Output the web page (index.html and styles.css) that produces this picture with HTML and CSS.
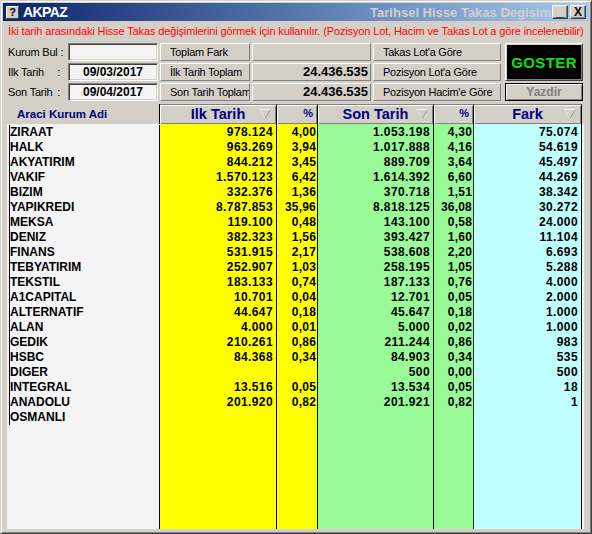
FILE: index.html
```html
<!DOCTYPE html>
<html lang="tr">
<head>
<meta charset="utf-8">
<title>AKPAZ</title>
<link rel="stylesheet" href="styles.css">
</head>
<body>
<div class="window">
  <div class="titlebar">
    <span class="help-icon">?</span>
    <span class="app-title">AKPAZ</span>
    <span class="sub-title">Tarihsel Hisse Takas Degisim</span>
    <span class="tb-btn">_</span>
    <span class="tb-btn close">X</span>
  </div>
  <div class="note">İki tarih arasındaki Hisse Takas değişimlerini görmek için kullanılır. (Pozisyon Lot, Hacim ve Takas Lot a göre incelenebilir)</div>
  <div class="controls">
    <div class="lbl">Kurum Bul :</div>
    <div class="field"></div>
    <div class="btn">Toplam Fark</div>
    <div class="panel"></div>
    <div class="btn">Takas Lot'a Göre</div>
    <div class="goster">GOSTER</div>

    <div class="lbl">Ilk Tarih<span class="colon">:</span></div>
    <div class="field">09/03/2017</div>
    <div class="btn">İlk Tarih Toplam</div>
    <div class="panel value">24.436.535</div>
    <div class="btn">Pozisyon Lot'a Göre</div>

    <div class="lbl">Son Tarih<span class="colon">:</span></div>
    <div class="field">09/04/2017</div>
    <div class="btn">Son Tarih Toplam</div>
    <div class="panel value">24.436.535</div>
    <div class="btn">Pozisyon Hacim'e Göre</div>
    <div class="yazdir">Yazdir</div>
  </div>

  <div class="grid">
    <div class="row head">
      <div class="hname">Araci Kurum Adi</div>
      <div class="hcol">Ilk Tarih<svg class="sort" viewBox="0 0 12 10" width="12" height="10"><polygon points="0.5,0.5 11.5,0.5 6,9.5" fill="none" stroke="#9a9a9a"/><polyline points="0.5,0.5 11.5,0.5" stroke="#fff" fill="none"/><polyline points="0.5,0.5 6,9.5" stroke="#f4f4f4" fill="none"/></svg></div>
      <div class="hpct">%</div>
      <div class="hcol">Son Tarih<svg class="sort" viewBox="0 0 12 10" width="12" height="10"><polygon points="0.5,0.5 11.5,0.5 6,9.5" fill="none" stroke="#9a9a9a"/><polyline points="0.5,0.5 11.5,0.5" stroke="#fff" fill="none"/><polyline points="0.5,0.5 6,9.5" stroke="#f4f4f4" fill="none"/></svg></div>
      <div class="hpct">%</div>
      <div class="hcol">Fark<svg class="sort" viewBox="0 0 12 10" width="12" height="10"><polygon points="0.5,0.5 11.5,0.5 6,9.5" fill="none" stroke="#9a9a9a"/><polyline points="0.5,0.5 11.5,0.5" stroke="#fff" fill="none"/><polyline points="0.5,0.5 6,9.5" stroke="#f4f4f4" fill="none"/></svg></div>
    </div>
    <div class="body">
      <div class="row"><div class="name">ZIRAAT</div><div class="c1">978.124</div><div class="c2">4,00</div><div class="c3">1.053.198</div><div class="c4">4,30</div><div class="c5">75.074</div></div>
      <div class="row"><div class="name">HALK</div><div class="c1">963.269</div><div class="c2">3,94</div><div class="c3">1.017.888</div><div class="c4">4,16</div><div class="c5">54.619</div></div>
      <div class="row"><div class="name">AKYATIRIM</div><div class="c1">844.212</div><div class="c2">3,45</div><div class="c3">889.709</div><div class="c4">3,64</div><div class="c5">45.497</div></div>
      <div class="row"><div class="name">VAKIF</div><div class="c1">1.570.123</div><div class="c2">6,42</div><div class="c3">1.614.392</div><div class="c4">6,60</div><div class="c5">44.269</div></div>
      <div class="row"><div class="name">BIZIM</div><div class="c1">332.376</div><div class="c2">1,36</div><div class="c3">370.718</div><div class="c4">1,51</div><div class="c5">38.342</div></div>
      <div class="row"><div class="name">YAPIKREDI</div><div class="c1">8.787.853</div><div class="c2">35,96</div><div class="c3">8.818.125</div><div class="c4">36,08</div><div class="c5">30.272</div></div>
      <div class="row"><div class="name">MEKSA</div><div class="c1">119.100</div><div class="c2">0,48</div><div class="c3">143.100</div><div class="c4">0,58</div><div class="c5">24.000</div></div>
      <div class="row"><div class="name">DENIZ</div><div class="c1">382.323</div><div class="c2">1,56</div><div class="c3">393.427</div><div class="c4">1,60</div><div class="c5">11.104</div></div>
      <div class="row"><div class="name">FINANS</div><div class="c1">531.915</div><div class="c2">2,17</div><div class="c3">538.608</div><div class="c4">2,20</div><div class="c5">6.693</div></div>
      <div class="row"><div class="name">TEBYATIRIM</div><div class="c1">252.907</div><div class="c2">1,03</div><div class="c3">258.195</div><div class="c4">1,05</div><div class="c5">5.288</div></div>
      <div class="row"><div class="name">TEKSTIL</div><div class="c1">183.133</div><div class="c2">0,74</div><div class="c3">187.133</div><div class="c4">0,76</div><div class="c5">4.000</div></div>
      <div class="row"><div class="name">A1CAPITAL</div><div class="c1">10.701</div><div class="c2">0,04</div><div class="c3">12.701</div><div class="c4">0,05</div><div class="c5">2.000</div></div>
      <div class="row"><div class="name">ALTERNATIF</div><div class="c1">44.647</div><div class="c2">0,18</div><div class="c3">45.647</div><div class="c4">0,18</div><div class="c5">1.000</div></div>
      <div class="row"><div class="name">ALAN</div><div class="c1">4.000</div><div class="c2">0,01</div><div class="c3">5.000</div><div class="c4">0,02</div><div class="c5">1.000</div></div>
      <div class="row"><div class="name">GEDIK</div><div class="c1">210.261</div><div class="c2">0,86</div><div class="c3">211.244</div><div class="c4">0,86</div><div class="c5">983</div></div>
      <div class="row"><div class="name">HSBC</div><div class="c1">84.368</div><div class="c2">0,34</div><div class="c3">84.903</div><div class="c4">0,34</div><div class="c5">535</div></div>
      <div class="row"><div class="name">DIGER</div><div class="c1"></div><div class="c2"></div><div class="c3">500</div><div class="c4">0,00</div><div class="c5">500</div></div>
      <div class="row"><div class="name">INTEGRAL</div><div class="c1">13.516</div><div class="c2">0,05</div><div class="c3">13.534</div><div class="c4">0,05</div><div class="c5">18</div></div>
      <div class="row"><div class="name">ANADOLU</div><div class="c1">201.920</div><div class="c2">0,82</div><div class="c3">201.921</div><div class="c4">0,82</div><div class="c5">1</div></div>
      <div class="row"><div class="name">OSMANLI</div><div class="c1"></div><div class="c2"></div><div class="c3"></div><div class="c4"></div><div class="c5"></div></div>
      <div class="row filler"><div class="name"></div><div class="c1"></div><div class="c2"></div><div class="c3"></div><div class="c4"></div><div class="c5"></div></div>
    </div>
  </div>
</div>
</body>
</html>
```

FILE: styles.css
```css
* { box-sizing: border-box; }

html, body {
  margin: 0;
  padding: 0;
  background: #d4d0c8;
}

body {
  width: 592px;
  height: 534px;
  overflow: hidden;
  font-family: "Liberation Sans", Arial, sans-serif;
}

.window {
  width: 592px;
  height: 534px;
  background: #d4d0c8;
  border-top: 1px solid #d4d0c8;
  border-left: 1px solid #d4d0c8;
  border-right: 1px solid #404040;
  border-bottom: 1px solid #404040;
  box-shadow: inset 1px 1px 0 #fff, inset -1px -1px 0 #808080;
  padding: 2px;
  display: flex;
  flex-direction: column;
}

/* title bar */
.titlebar {
  height: 18px;
  flex: none;
  display: flex;
  align-items: center;
  padding: 0 3px 0 3px;
  background: linear-gradient(to right, #0a246a, #a6caf0);
}

.help-icon {
  width: 13px;
  height: 13px;
  background: #d4d0c8;
  border: 1px solid #fff;
  border-right-color: #404040;
  border-bottom-color: #404040;
  font-size: 11px;
  font-weight: bold;
  line-height: 11px;
  text-align: center;
  color: #000;
}

.app-title {
  margin-left: 4px;
  color: #fff;
  font-weight: bold;
  font-size: 14px;
  letter-spacing: -0.6px;
}

.sub-title {
  margin-left: auto;
  margin-right: 1px;
  white-space: nowrap;
  color: #d4d0c8;
  font-weight: bold;
  font-size: 13px;
}

.tb-btn {
  width: 16px;
  height: 14px;
  background: #d4d0c8;
  border: 1px solid #fff;
  border-right-color: #404040;
  border-bottom-color: #404040;
  box-shadow: inset -1px -1px 0 #808080;
  font-size: 12px;
  font-weight: bold;
  line-height: 12px;
  text-align: center;
  color: #000;
}

.tb-btn.close { margin-left: 2px; }

/* note */
.note {
  height: 20px;
  flex: none;
  line-height: 20px;
  padding-left: 5px;
  color: #ff0000;
  font-size: 11px;
  white-space: nowrap;
  letter-spacing: -0.13px;
}

/* controls */
.controls {
  flex: none;
  margin: 2px 0 0 5px;
  display: grid;
  grid-template-columns: 58px 90px 90px 119px 128px 80px;
  grid-template-rows: repeat(3, 18px);
  column-gap: 2px;
  row-gap: 2px;
  font-size: 11px;
}

.lbl {
  display: flex;
  align-items: center;
  padding-right: 6px;
  letter-spacing: -0.2px;
  white-space: nowrap;
}

.lbl .colon { margin-left: auto; }

.field {
  background: #f4f4f4;
  border: 1px solid #808080;
  border-right-color: #fff;
  border-bottom-color: #fff;
  box-shadow: inset 1px 1px 0 #404040, inset -1px -1px 0 #d4d0c8;
  font-weight: bold;
  font-size: 12px;
  text-align: center;
  line-height: 16px;
}

.btn, .panel {
  background: #d4d0c8;
  border: 1px solid #fff;
  border-right-color: #808080;
  border-bottom-color: #808080;
  padding-left: 9px;
  line-height: 16px;
  white-space: nowrap;
  overflow: hidden;
  letter-spacing: -0.25px;
}

.panel.value {
  padding: 0 2px 0 0;
  text-align: right;
  font-weight: bold;
  font-size: 13px;
  letter-spacing: 0;
}

.goster {
  grid-column: 6;
  grid-row: 1 / 3;
  justify-self: end;
  width: 78px;
  background: #000;
  border: 1px solid #fff;
  border-right-color: #404040;
  border-bottom-color: #404040;
  box-shadow: inset 1px 1px 0 #d4d0c8, inset -1px -1px 0 #808080;
  color: #10e010;
  font-weight: bold;
  font-size: 15px;
  letter-spacing: 0.4px;
  display: flex;
  align-items: center;
  justify-content: center;
}

.yazdir {
  grid-column: 6;
  grid-row: 3;
  justify-self: end;
  width: 78px;
  background: #d4d0c8;
  border: 1px solid #000;
  box-shadow: inset 1px 1px 0 #fff, inset -1px -1px 0 #808080;
  color: #808080;
  font-weight: bold;
  font-size: 12px;
  line-height: 16px;
  text-align: center;
}

/* grid */
.grid {
  flex: 1;
  margin: 3px 5px 2px 4px;
  display: flex;
  flex-direction: column;
  min-height: 0;
}

.row {
  display: grid;
  grid-template-columns: 153px 117px 41px 116px 40px 108px;
  height: 15px;
}

.row.head { height: 20px; }

.hname {
  padding-left: 10px;
  color: #000080;
  font-weight: bold;
  font-size: 11.5px;
  line-height: 20px;
  border-right: 1px solid #000;
}

.hcol, .hpct {
  position: relative;
  background: #d4d0c8;
  border-top: 1px solid #808080;
  border-right: 1px solid #000;
  box-shadow: inset 1px 1px 0 #fff, inset -1px -1px 0 #808080;
  color: #000080;
  font-weight: bold;
}

.hcol {
  text-align: center;
  font-size: 14.5px;
  line-height: 18px;
}

.hpct {
  text-align: right;
  padding-right: 4px;
  font-size: 11px;
  line-height: 17px;
}

.sort {
  position: absolute;
  right: 5px;
  top: 4px;
}

.body {
  flex: 1;
  display: flex;
  flex-direction: column;
  padding-top: 1px;
  background: #f4f4f4;
}

.body .row {
  font-size: 12px;
  font-weight: bold;
  line-height: 15px;
  color: #000;
}

.body .row.filler { flex: 1; height: auto; }

.body .row:first-child > div:not(.name) { margin-top: -1px; padding-top: 1px; }

.name {
  background: #f4f4f4;
  border-right: 1px solid #000;
  padding-left: 3px;
  white-space: nowrap;
}

.body .row:not(.filler) .name {
  border-left: 1px solid #000;
  margin-left: 2px;
  padding-left: 0;
}

.c1, .c2, .c3, .c4, .c5 {
  text-align: right;
  padding-right: 3px;
  letter-spacing: 0.4px;
  border-right: 1px solid #000;
  white-space: nowrap;
}

.c1, .c2 { background: #ffff00; }
.c3, .c4 { background: #98fb98; }
.c5 { background: #c0ffff; }
.c2, .c4 { padding-right: 1px; letter-spacing: 0.2px; }
.c4 { border-right-color: #303030; }
```
